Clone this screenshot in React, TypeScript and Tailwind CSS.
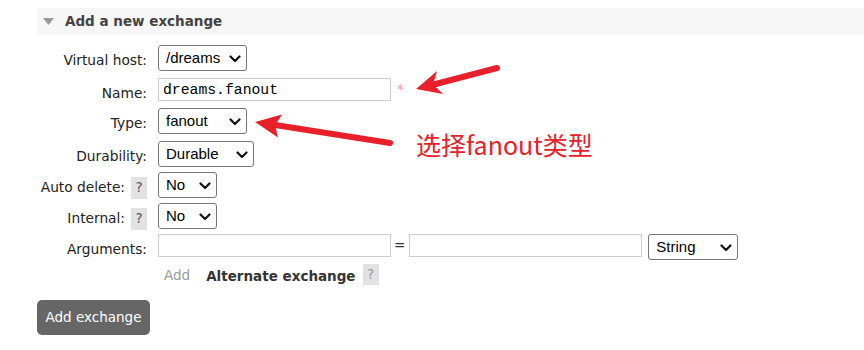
import type { ReactNode } from "react";

const labelFont = "font-['DejaVu_Sans',Verdana,sans-serif]";

const Help = ({ faded = false }: { faded?: boolean }) => (
  <span
    className={`ml-[6px] mt-[5px] flex h-[22px] w-[16px] items-center justify-center bg-[#e2e2e2] text-[13.5px] leading-none ${
      faded ? "text-[#9a9a9a]" : "text-[#555]"
    }`}
  >
    ?
  </span>
);

const Chevron = () => (
  <svg
    width="12"
    height="8"
    viewBox="0 0 12 8"
    className="pointer-events-none absolute right-[6px] top-[10px]"
  >
    <polyline
      points="1.5,1.5 6,6 10.5,1.5"
      fill="none"
      stroke="#111"
      strokeWidth="2.2"
      strokeLinecap="round"
      strokeLinejoin="round"
    />
  </svg>
);

const Select = ({ value, width }: { value: string; width: string }) => (
  <div className={`relative h-[26px] ${width}`}>
    <select
      defaultValue={value}
      className="h-[26px] w-full appearance-none rounded-[3px] border border-[#767676] bg-white pl-[7px] font-['Liberation_Sans',Arial,sans-serif] text-[15px] text-black outline-none"
    >
      <option>{value}</option>
    </select>
    <Chevron />
  </div>
);

const TextInput = ({ value = "" }: { value?: string }) => (
  <input
    defaultValue={value}
    className="h-[23px] w-[233px] border border-[#cccccc] bg-white pl-[4px] font-['Liberation_Mono','Courier_New',monospace] text-[14.75px] text-black outline-none"
  />
);

const Row = ({
  label,
  help,
  height,
  children,
}: {
  label: string;
  help?: boolean;
  height: string;
  children: ReactNode;
}) => (
  <div className={`flex items-start ${height}`}>
    <div className="flex w-[110px] items-start justify-end">
      <span className="pt-[7px] text-[13.75px] leading-[16px] text-[#222]">
        {label}
      </span>
      {help && <Help />}
    </div>
    <div className="ml-[11px] flex items-start">{children}</div>
  </div>
);

const Annotations = () => (
  <>
    <svg
      width="864"
      height="350"
      className="pointer-events-none absolute left-0 top-0"
    >
      <line
        x1="497"
        y1="68"
        x2="430"
        y2="85.5"
        stroke="#e8202a"
        strokeWidth="6"
        strokeLinecap="round"
      />
      <polygon points="416,89 437,71 433,84.5 443,94" fill="#e8202a" />
      <line
        x1="390"
        y1="143"
        x2="272"
        y2="124.5"
        stroke="#e8202a"
        strokeWidth="6"
        strokeLinecap="round"
      />
      <polygon points="255,122 282,114.5 275,125 278,137.5" fill="#e8202a" />
    </svg>
    <span className="absolute left-[416px] top-[132px] font-['Noto_Sans_CJK_SC',sans-serif] text-[25px] leading-none text-[#e8202a]">
      选择fanout类型
    </span>
  </>
);

export default function App() {
  return (
    <div
      className={`relative h-[350px] w-[864px] overflow-hidden bg-white text-[13.5px] ${labelFont}`}
    >
      <div className="ml-[37px] mt-[8px] flex h-[27px] items-center bg-[#f7f7f7]">
        <svg width="11" height="7" viewBox="0 0 11 7" className="ml-[6px]">
          <polygon points="0,0 11,0 5.5,7" fill="#999" />
        </svg>
        <span className="ml-[11px] font-bold text-[#444]">
          Add a new exchange
        </span>
      </div>

      <div className="ml-[37px] mt-[10px] flex flex-col">
        <Row label="Virtual host:" height="h-[33px]">
          <Select value="/dreams" width="w-[89px]" />
        </Row>
        <Row label="Name:" height="h-[30px]">
          <TextInput value="dreams.fanout" />
          <span className="ml-[6px] pt-[3px] leading-[16px] text-[#f49a9a]">
            *
          </span>
        </Row>
        <Row label="Type:" height="h-[33px]">
          <Select value="fanout" width="w-[89px]" />
        </Row>
        <Row label="Durability:" height="h-[31px]">
          <Select value="Durable" width="w-[96px]" />
        </Row>
        <Row label="Auto delete:" help height="h-[31px]">
          <Select value="No" width="w-[59px]" />
        </Row>
        <Row label="Internal:" help height="h-[31px]">
          <Select value="No" width="w-[59px]" />
        </Row>
        <Row label="Arguments:" height="h-[30px]">
          <TextInput />
          <span className="ml-[3px] mr-[4px] pt-[3px] leading-[16px] text-[#333]">
            =
          </span>
          <TextInput />
          <div className="ml-[6px]">
            <Select value="String" width="w-[90px]" />
          </div>
        </Row>
        <div className="flex h-[36px] items-start pl-[127px]">
          <span className="pt-[3px] leading-[16px] text-[#999]">Add</span>
          <span className="ml-[16px] pt-[4px] font-bold leading-[16px] text-[#333]">
            Alternate exchange
          </span>
          <span className="ml-[7px] flex h-[21px] w-[16px] items-center justify-center bg-[#e2e2e2] leading-none text-[#9a9a9a]">
            ?
          </span>
        </div>
        <button className="h-[35px] w-[113px] rounded-[5px] bg-[#666] text-[13.5px] text-white">
          Add exchange
        </button>
      </div>

      <Annotations />
    </div>
  );
}
